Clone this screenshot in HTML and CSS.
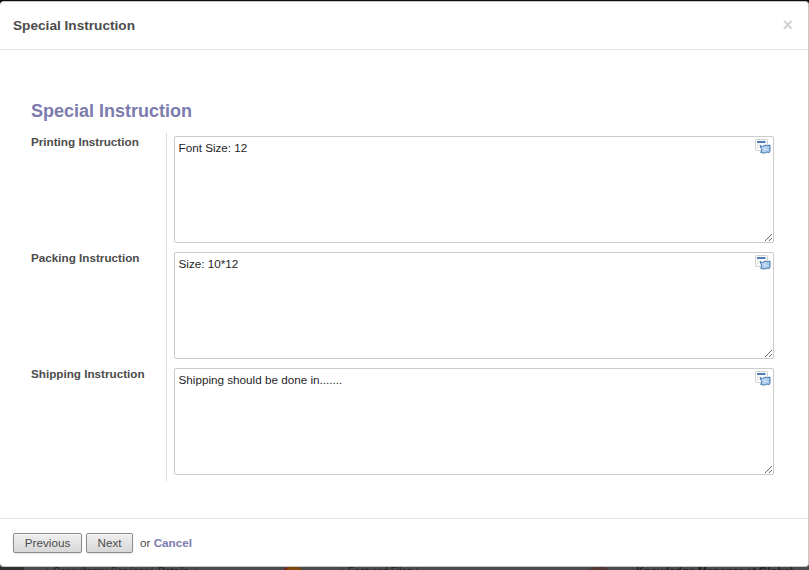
FILE: index.html
```html
<!DOCTYPE html>
<html lang="en">
<head>
<meta charset="utf-8">
<title>Special Instruction</title>
<link rel="stylesheet" href="styles.css">
</head>
<body>
<svg width="0" height="0" class="defs" aria-hidden="true">
  <symbol id="translate" viewBox="0 0 16 16">
    <rect x=".5" y=".5" width="12" height="11" rx="1" fill="#fbfbfb" stroke="#d0d0d0"/>
    <path d="M2 3h8.500" stroke="#2f6aac" stroke-width="1.700"/>
    <path d="M2 6h2M2 8.500h2" stroke="#dedede"/>
    <path d="M5 6.500l2.500 1 3-1.500 2 .8 2.500-.8v6l-.8 1.500-2.200-.4-2.500 1-3.700-.6.800-3z" fill="#a9cbee" stroke="#4777ad"/>
    <path d="M7.500 9l1.500.7 2.500-1.700M9 12l1.500-2 2 1" fill="none" stroke="#d5e7f9"/>
  </symbol>
</svg>
<main class="dialog">
  <header class="head"><h1>Special Instruction</h1><button class="close" aria-label="Close">×</button></header>
  <section class="body">
    <h2>Special Instruction</h2>
    <div class="form">
      <div class="row"><label for="a">Printing Instruction</label><div class="cell"><textarea id="a">Font Size: 12</textarea><svg class="icon"><use href="#translate"/></svg></div></div>
      <div class="row"><label for="b">Packing Instruction</label><div class="cell"><textarea id="b">Size: 10*12</textarea><svg class="icon"><use href="#translate"/></svg></div></div>
      <div class="row"><label for="c">Shipping Instruction</label><div class="cell"><textarea id="c">Shipping should be done in.......</textarea><svg class="icon"><use href="#translate"/></svg></div></div>
    </div>
  </section>
  <footer class="foot"><button class="btn prev">Previous</button><button class="btn next">Next</button><span class="or">or <a class="cancel">Cancel</a></span></footer>
</main>
<div class="backdrop">
  <span class="photo"></span>
  <span class="tag t1">Consultancy Services</span>
  <span class="tag t2">Details</span>
  <span class="fruit"></span>
  <span class="tag t3">Featured Files</span>
  <span class="face"></span>
  <strong>Knowledge Manager at Global</strong>
</div>
</body>
</html>
```

FILE: styles.css
```css
* { box-sizing: border-box; }
body {
  margin: 0;
  height: 570px;
  padding-top: 1px;
  overflow: hidden;
  background: linear-gradient(#0c0c0c 0 20px, #4b4b4d 20px);
  color: #4c4c4c;
  font: 11.7px/15px "Liberation Sans", Arial, sans-serif;
}
.defs { position: absolute; }
.dialog {
  position: relative;
  z-index: 1;
  display: flex;
  flex-direction: column;
  height: 566px;
  background: #fff;
  border: 1px solid #c6c6c6;
  border-left: 0;
  border-radius: 4px;
}
.head {
  display: flex;
  justify-content: space-between;
  align-items: center;
  height: 48px;
  padding: 0 15px 0 13px;
  border-bottom: 1px solid #e2e2e2;
}
h1 { margin: 0; font-size: 13.65px; }
.close {
  padding: 0 0 2px;
  border: 0;
  background: none;
  color: #d4d4d4;
  font: bold 18px/18px "Liberation Sans", Arial, sans-serif;
}
.body { flex: 1; padding: 50px 34px 0 31px; }
h2 { margin: 0; font-size: 18px; line-height: 22px; color: #7c7bad; }
.form { margin-top: 11px; }
.row { display: flex; height: 116px; }
label {
  width: 136px;
  padding-top: 1px;
  font-weight: bold;
  border-right: 1px solid #ddd;
}
.cell { position: relative; flex: 1; padding: 3px 0 0 7px; }
textarea {
  display: block;
  width: 600px;
  height: 107px;
  padding: 3px 3.5px;
  border: 1px solid #ccc;
  border-radius: 2px;
  color: #1f1f1f;
  font: 11.7px/15px "Liberation Sans", Arial, sans-serif;
  resize: both;
}
.icon { position: absolute; top: 6px; right: 3px; width: 16px; height: 16px; }
.foot {
  display: flex;
  align-items: center;
  height: 48px;
  padding: 1px 0 0 13px;
  border-top: 1px solid #e2e2e2;
}
.btn {
  height: 20px;
  margin-right: 4px;
  padding: 0;
  border: 1px solid #8b8b8b;
  border-radius: 2px;
  background: linear-gradient(#efefef, #d8d8d8);
  box-shadow: 0 1px 2px rgba(0,0,0,.1), inset 0 1px 1px rgba(255,255,255,.8);
  color: #4c4c4c;
  font: 11.7px/18px "Liberation Sans", Arial, sans-serif;
}
.prev { width: 69px; }
.next { width: 47px; }
.or { margin-left: 3px; padding-bottom: 2px; }
.cancel { color: #7c7bad; font-weight: bold; }
.backdrop {
  display: flex;
  height: 3px;
  overflow: hidden;
  color: #202024;
  font-size: 10px;
  line-height: 10px;
  white-space: nowrap;
}
.photo { width: 24px; background: #303030; }
.tag { height: 12px; padding-left: 5px; border: solid #38383a; border-width: 0 1px; }
.t1 { width: 105px; margin-left: 23px; }
.t2 { width: 44px; }
.fruit { width: 22px; height: 12px; margin-left: 86px; border-radius: 8px 8px 0 0; background: #7c4a05; border-left: 3px solid #8b1712; }
.t3 { width: 75px; margin-left: 38px; }
.face { width: 22px; height: 12px; margin-left: 171px; border-radius: 8px 8px 0 0; background: #563832; }
.backdrop strong { margin-left: 26px; font-size: 11px; line-height: 9px; }
```
